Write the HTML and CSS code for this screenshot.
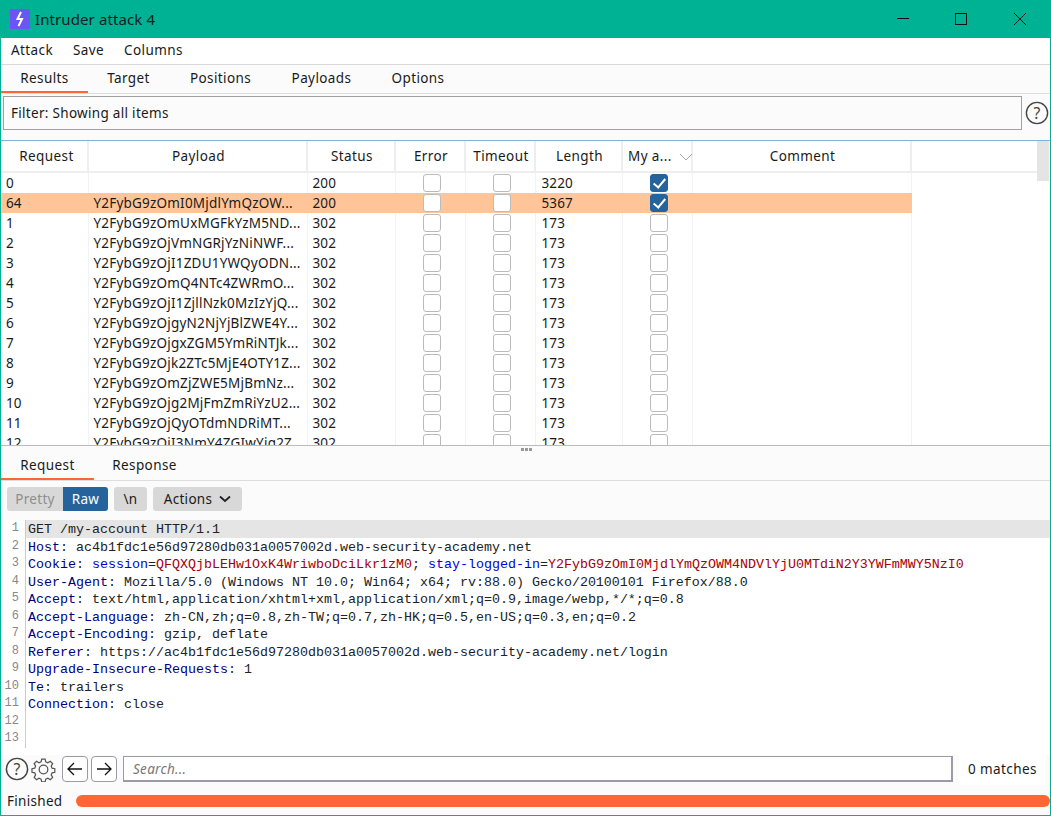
FILE: index.html
```html
<!DOCTYPE html>
<html lang="en">
<head>
<meta charset="utf-8">
<title>Intruder attack 4</title>
<link rel="stylesheet" href="styles.css">
</head>
<body>
<div class="window">
  <header class="titlebar">
    <div class="app-icon"><svg viewBox="0 0 20 20" width="20" height="20"><path d="M11 3 L7.500 10 H12 L8.500 17" fill="none" stroke="#fff" stroke-width="2"/></svg></div>
    <span class="app-title">Intruder attack 4</span>
    <div class="win-controls">
      <svg class="win-btn" viewBox="0 0 12 12" width="12" height="12"><path d="M0 5.500H12" stroke="#111" fill="none"/></svg>
      <svg class="win-btn" viewBox="0 0 12 12" width="12" height="12"><rect x=".5" y=".5" width="11" height="11" stroke="#111" fill="none"/></svg>
      <svg class="win-btn" viewBox="0 0 12 12" width="12" height="12"><path d="M0 0L12 12M12 0L0 12" stroke="#111" fill="none"/></svg>
    </div>
  </header>
  <nav class="menubar"><span>Attack</span><span>Save</span><span>Columns</span></nav>
  <nav class="tabs main-tabs">
    <span class="tab active">Results</span><span class="tab">Target</span><span class="tab">Positions</span><span class="tab">Payloads</span><span class="tab">Options</span>
  </nav>
  <div class="filter-row">
    <div class="filter">Filter: Showing all items</div>
    <svg class="help help-lg" viewBox="0 0 26 26" width="24" height="24"><circle cx="13" cy="13" r="11.500" fill="none" stroke="#444" stroke-width="1.500"/><text x="13" y="19" text-anchor="middle" class="help-mark">?</text></svg>
  </div>
  <section class="results">
    <div class="table-scroll">
      <table class="grid">
        <colgroup><col class="c-req"><col class="c-pay"><col class="c-stat"><col class="c-err"><col class="c-time"><col class="c-len"><col class="c-my"><col class="c-com"><col></colgroup>
        <thead><tr><th>Request</th><th>Payload</th><th>Status</th><th>Error</th><th>Timeout</th><th>Length</th><th class="sorted">My a... <svg viewBox="0 0 14 8" width="14" height="8"><path d="M1 1L7 7L13 1" fill="none" stroke="#aaa"/></svg></th><th>Comment</th><th class="blank"></th></tr></thead>
        <tbody>
          <tr><td>0</td><td></td><td>200</td><td class="ck"><i class="box"></i></td><td class="ck"><i class="box"></i></td><td>3220</td><td class="ck"><i class="box on"></i></td><td></td><td></td></tr>
          <tr class="sel"><td>64</td><td class="pay">Y2FybG9zOmI0MjdlYmQzOW...</td><td>200</td><td class="ck"><i class="box"></i></td><td class="ck"><i class="box"></i></td><td>5367</td><td class="ck"><i class="box on"></i></td><td></td><td class="nosel"></td></tr>
          <tr><td>1</td><td class="pay">Y2FybG9zOmUxMGFkYzM5ND...</td><td>302</td><td class="ck"><i class="box"></i></td><td class="ck"><i class="box"></i></td><td>173</td><td class="ck"><i class="box"></i></td><td></td><td></td></tr>
          <tr><td>2</td><td class="pay">Y2FybG9zOjVmNGRjYzNiNWF...</td><td>302</td><td class="ck"><i class="box"></i></td><td class="ck"><i class="box"></i></td><td>173</td><td class="ck"><i class="box"></i></td><td></td><td></td></tr>
          <tr><td>3</td><td class="pay">Y2FybG9zOjI1ZDU1YWQyODN...</td><td>302</td><td class="ck"><i class="box"></i></td><td class="ck"><i class="box"></i></td><td>173</td><td class="ck"><i class="box"></i></td><td></td><td></td></tr>
          <tr><td>4</td><td class="pay">Y2FybG9zOmQ4NTc4ZWRmO...</td><td>302</td><td class="ck"><i class="box"></i></td><td class="ck"><i class="box"></i></td><td>173</td><td class="ck"><i class="box"></i></td><td></td><td></td></tr>
          <tr><td>5</td><td class="pay">Y2FybG9zOjI1ZjllNzk0MzIzYjQ...</td><td>302</td><td class="ck"><i class="box"></i></td><td class="ck"><i class="box"></i></td><td>173</td><td class="ck"><i class="box"></i></td><td></td><td></td></tr>
          <tr><td>6</td><td class="pay">Y2FybG9zOjgyN2NjYjBlZWE4Y...</td><td>302</td><td class="ck"><i class="box"></i></td><td class="ck"><i class="box"></i></td><td>173</td><td class="ck"><i class="box"></i></td><td></td><td></td></tr>
          <tr><td>7</td><td class="pay">Y2FybG9zOjgxZGM5YmRiNTJk...</td><td>302</td><td class="ck"><i class="box"></i></td><td class="ck"><i class="box"></i></td><td>173</td><td class="ck"><i class="box"></i></td><td></td><td></td></tr>
          <tr><td>8</td><td class="pay">Y2FybG9zOjk2ZTc5MjE4OTY1Z...</td><td>302</td><td class="ck"><i class="box"></i></td><td class="ck"><i class="box"></i></td><td>173</td><td class="ck"><i class="box"></i></td><td></td><td></td></tr>
          <tr><td>9</td><td class="pay">Y2FybG9zOmZjZWE5MjBmNz...</td><td>302</td><td class="ck"><i class="box"></i></td><td class="ck"><i class="box"></i></td><td>173</td><td class="ck"><i class="box"></i></td><td></td><td></td></tr>
          <tr><td>10</td><td class="pay">Y2FybG9zOjg2MjFmZmRiYzU2...</td><td>302</td><td class="ck"><i class="box"></i></td><td class="ck"><i class="box"></i></td><td>173</td><td class="ck"><i class="box"></i></td><td></td><td></td></tr>
          <tr><td>11</td><td class="pay">Y2FybG9zOjQyOTdmNDRiMT...</td><td>302</td><td class="ck"><i class="box"></i></td><td class="ck"><i class="box"></i></td><td>173</td><td class="ck"><i class="box"></i></td><td></td><td></td></tr>
          <tr><td>12</td><td class="pay">Y2FybG9zOjI3NmY4ZGIwYjg2Z...</td><td>302</td><td class="ck"><i class="box"></i></td><td class="ck"><i class="box"></i></td><td>173</td><td class="ck"><i class="box"></i></td><td></td><td></td></tr>
        </tbody>
      </table>
      <div class="scrollbar"><div class="thumb"></div></div>
    </div>
  </section>
  <div class="splitter"><span></span><span></span><span></span></div>
  <nav class="tabs sub-tabs"><span class="tab active">Request</span><span class="tab">Response</span></nav>
  <div class="toolbar">
    <div class="segmented"><span class="seg">Pretty</span><span class="seg seg-on">Raw</span></div>
    <span class="tool-btn">\n</span>
    <span class="tool-btn actions">Actions <svg viewBox="0 0 12 8" width="12" height="8"><path d="M1 1.500L6 6L11 1.500" fill="none" stroke="#222" stroke-width="1.800"/></svg></span>
  </div>
  <div class="editor">
    <div class="line current"><b>1</b><code>GET /my-account HTTP/1.1</code></div>
    <div class="line"><b>2</b><code><span class="k">Host</span>: ac4b1fdc1e56d97280db031a0057002d.web-security-academy.net</code></div>
    <div class="line"><b>3</b><code><span class="k">Cookie</span>: <span class="n">session</span>=<span class="v">QFQXQjbLEHw1OxK4WriwboDciLkr1zM0</span>; <span class="n">stay-logged-in</span>=<span class="v">Y2FybG9zOmI0MjdlYmQzOWM4NDVlYjU0MTdiN2Y3YWFmMWY5NzI0</span></code></div>
    <div class="line"><b>4</b><code><span class="k">User-Agent</span>: Mozilla/5.0 (Windows NT 10.0; Win64; x64; rv:88.0) Gecko/20100101 Firefox/88.0</code></div>
    <div class="line"><b>5</b><code><span class="k">Accept</span>: text/html,application/xhtml+xml,application/xml;q=0.9,image/webp,*/*;q=0.8</code></div>
    <div class="line"><b>6</b><code><span class="k">Accept-Language</span>: zh-CN,zh;q=0.8,zh-TW;q=0.7,zh-HK;q=0.5,en-US;q=0.3,en;q=0.2</code></div>
    <div class="line"><b>7</b><code><span class="k">Accept-Encoding</span>: gzip, deflate</code></div>
    <div class="line"><b>8</b><code><span class="k">Referer</span>: https://ac4b1fdc1e56d97280db031a0057002d.web-security-academy.net/login</code></div>
    <div class="line"><b>9</b><code><span class="k">Upgrade-Insecure-Requests</span>: 1</code></div>
    <div class="line"><b>10</b><code><span class="k">Te</span>: trailers</code></div>
    <div class="line"><b>11</b><code><span class="k">Connection</span>: close</code></div>
    <div class="line"><b>12</b><code></code></div>
    <div class="line"><b>13</b><code></code></div>
  </div>
  <div class="searchbar">
    <svg viewBox="0 0 26 26" width="24" height="24"><circle cx="13" cy="13" r="11.500" fill="none" stroke="#444" stroke-width="1.600"/><text x="13" y="19" text-anchor="middle" class="help-mark">?</text></svg>
    <svg class="gear" viewBox="0 0 26 26" width="25" height="25"><path d="M11 1.500h4l.7 3.200 2.400 1 2.800-1.700 2.800 2.800-1.700 2.800 1 2.400 3.200.7v4l-3.200.7-1 2.400 1.700 2.800-2.800 2.800-2.800-1.700-2.400 1-.7 3.200h-4l-.7-3.200-2.400-1-2.800 1.700-2.800-2.800 1.700-2.800-1-2.400-3.200-.7v-4l3.200-.7 1-2.400-1.700-2.800 2.800-2.800 2.800 1.700 2.400-1z" transform="translate(1.200 .8) scale(.9)" fill="none" stroke="#555" stroke-width="1.400"/><circle cx="13" cy="13" r="4.500" fill="none" stroke="#555" stroke-width="1.300"/></svg>
    <span class="nav-btn"><svg viewBox="0 0 16 14" width="16" height="14"><path d="M15 7H1M7 1L1 7L7 13" fill="none" stroke="#111" stroke-width="1.300"/></svg></span>
    <span class="nav-btn"><svg viewBox="0 0 16 14" width="16" height="14"><path d="M1 7H15M9 1L15 7L9 13" fill="none" stroke="#111" stroke-width="1.300"/></svg></span>
    <div class="search-input">Search...</div>
    <span class="matches">0 matches</span>
  </div>
  <footer class="statusbar">
    <span>Finished</span>
    <div class="progress"></div>
  </footer>
</div>
</body>
</html>
```
FILE: styles.css
```css
* { box-sizing: border-box; }
html, body { margin: 0; height: 100%; }
body { font-family: "Noto Sans", "Open Sans", sans-serif; font-size: 13.500px; letter-spacing: .3px; color: #1a1a1a; background: #fff; overflow: hidden; }
.window { width: 1051px; height: 816px; display: flex; flex-direction: column; border: 1px solid #00b294; border-top: 0; background: #fbfbfb; }
.titlebar { height: 38px; flex: none; background: #00b294; display: flex; align-items: center; padding-left: 10px; margin: 0 -1px; }
.app-icon { width: 20px; height: 20px; background: #6b55f5; }
.app-icon svg { display: block; }
.app-title { margin-left: 5px; font-size: 15px; letter-spacing: .1px; color: #10201c; }
.win-controls { margin-left: auto; display: flex; gap: 46px; padding-right: 25px; }
.win-btn { display: block; }
.win-btn:last-child { margin-left: 1px; }
.menubar { height: 27px; flex: none; background: #fff; display: flex; gap: 20px; align-items: center; padding: 0 0 2px 10px; border-bottom: 1px solid #d8d8d8; }
.menubar span { letter-spacing: .4px; }
.tabs { display: flex; flex: none; background: #fbfbfb; border-bottom: 1px solid #ddd; }
.tab { height: 100%; display: flex; align-items: center; justify-content: center; border-bottom: 2px solid transparent; margin-bottom: -1px; letter-spacing: .4px; }
.tab.active { border-bottom-color: #ff6633; }
.main-tabs { height: 29px; }
.main-tabs .tab:nth-child(1) { width: 87px; }
.main-tabs .tab:nth-child(2) { width: 81px; }
.main-tabs .tab:nth-child(3) { width: 103px; }
.main-tabs .tab:nth-child(4) { width: 99px; }
.main-tabs .tab:nth-child(5) { width: 94px; }
.filter-row { height: 46px; flex: none; display: flex; align-items: flex-start; padding: 2px 0 0 2px; gap: 3px; }
.filter { width: 1019px; height: 34px; background: #fbfbfb; border: 1px solid #a0a0a0; padding-left: 7px; line-height: 32px; }
.help-lg { margin-top: 5px; flex: none; }
.help-mark { font-family: "Noto Sans", sans-serif; font-size: 17px; fill: #444; }
.results { height: 305px; flex: none; border-top: 1px solid #7fb2dc; background: #fff; overflow: hidden; }
.table-scroll { display: flex; height: 100%; }
.grid { width: 1036px; flex: none; border-collapse: collapse; table-layout: fixed; align-self: flex-start; }
.c-req { width: 87px; } .c-pay { width: 219px; } .c-stat { width: 88px; } .c-err { width: 70px; } .c-time { width: 70px; } .c-len { width: 87px; } .c-my { width: 70px; } .c-com { width: 219px; }
.grid th { height: 31px; font-weight: 400; text-align: center; padding: 0 0 0 2px; letter-spacing: .4px; border-bottom: 2px solid #eee; border-right: 2px solid #eee; background: #fff; white-space: nowrap; }
.grid th:first-child { padding-left: 5px; }
.grid th.blank { border-right: 0; }
.grid th.sorted { text-align: left; padding-left: 5px; }
.grid th.sorted svg { margin-left: 3px; }
.grid td { height: 20px; padding: 0 0 0 5px; line-height: 20px; letter-spacing: .15px; border-right: 1px solid #f3f3f3; white-space: nowrap; overflow: hidden; }
.grid td:first-child { padding-left: 5px; }
.grid td:nth-child(6) { padding-left: 6px; }
.grid td:last-child { border-right: 0; }
.grid td.pay { letter-spacing: .2px; }
.grid tr.sel td { background: #ffc599; border-right-color: #ffc599; }
.grid tr.sel td.nosel { background: #fff; }
.grid td.ck { padding: 0 0 0 3px; }
.box { display: block; width: 18px; height: 18px; margin: 0 auto; border: 1.500px solid #bbb; border-radius: 3px; background: #fff; position: relative; }
.box.on { background: #24639c; border-color: #24639c; }
.box.on::after { content: ""; position: absolute; left: 5px; top: 1px; width: 5px; height: 10px; border: solid #fff; border-width: 0 2px 2px 0; transform: rotate(40deg); }
.scrollbar { flex: 1; background: #fff; }
.thumb { width: 12px; height: 40px; background: #e4e4e4; }
.splitter { height: 10px; flex: none; display: flex; gap: 1px; justify-content: center; padding: 2px 0 0 2px; background: #fbfbfb; border-top: 1px solid #bbb; }
.splitter span { width: 3px; height: 3px; background: #999; }
.sub-tabs { height: 26px; }
.sub-tabs .tab { width: 93px; padding-bottom: 3px; }
.sub-tabs .tab:nth-child(2) { width: 101px; }
.toolbar { height: 39px; flex: none; display: flex; align-items: flex-start; gap: 6px; padding: 6px 0 0 6px; background: #fbfbfb; }
.segmented { display: flex; border-radius: 3px; overflow: hidden; height: 24px; }
.seg { background: #d8d8d8; color: #8f8f8f; width: 56px; text-align: center; line-height: 24px; }
.seg-on { background: #24639c; color: #fff; width: 45px; }
.tool-btn { background: #d8d8d8; border-radius: 3px; height: 24px; line-height: 24px; width: 33px; text-align: center; }
.actions { width: 89px; display: flex; align-items: center; justify-content: center; gap: 7px; }
.editor { height: 235px; flex: none; background: #fff; }
.line { display: flex; height: 17.500px; line-height: 17.500px; font-family: "Liberation Mono", monospace; font-size: 13.330px; letter-spacing: 0; }
.line b { flex: none; width: 25px; font-weight: 400; text-align: right; padding-right: 6px; color: #888; border-right: 1px solid #ccc; font-size: 12px; }
.line code { font: inherit; line-height: 19px; padding-left: 2px; flex: 1; white-space: pre; color: #222; }
.line.current code { background: #e5e5e5; }
.k { color: #00007f; }
.n { color: #0000e0; }
.v { color: #a80000; }
.searchbar { height: 34px; flex: none; display: flex; align-items: flex-start; padding: 1px 0 0 4px; background: #fbfbfb; }
.searchbar > svg { flex: none; margin-right: 2px; margin-top: 1px; }
.searchbar > .gear { margin-right: 3px; }
.nav-btn { width: 26px; height: 26px; margin-left: 3px; border: 1px solid #9a9aa8; border-radius: 4px; display: flex; align-items: center; justify-content: center; background: #fff; }
.search-input { width: 830px; height: 26px; margin-left: 6px; background: #fff; border: 2px solid #9a9aa8; border-width: 1px 2px 2px 1px; padding-left: 9px; line-height: 24px; font-style: italic; color: #777; }
.matches { margin: -3px 0 0 6px; height: 32px; line-height: 32px; padding: 0 8px 0 9px; background: #fff; letter-spacing: .4px; }
.statusbar { flex: 1; display: flex; align-items: center; gap: 14px; padding: 0 0 2px 6px; }
.progress { flex: 1; height: 12px; background: #ff6633; border-radius: 6px; }
```
